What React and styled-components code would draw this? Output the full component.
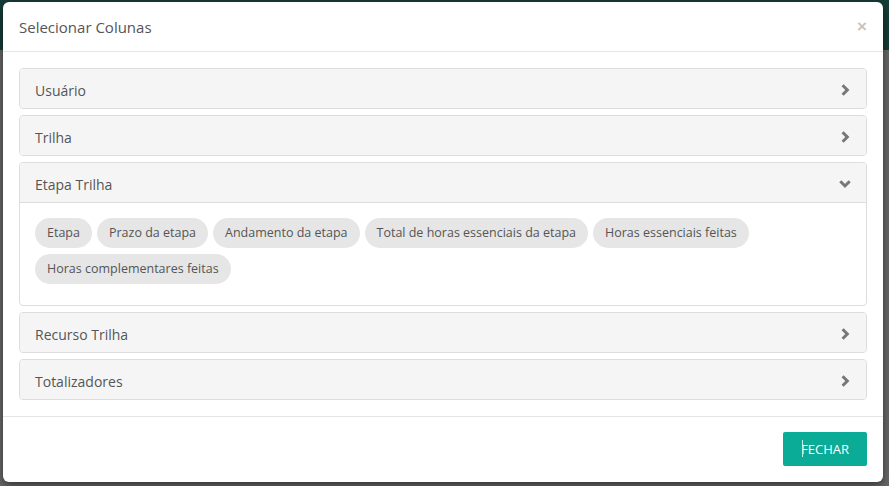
import React, { useState } from "react";
import styled, { createGlobalStyle } from "styled-components";

const Global = createGlobalStyle`
  html, body { margin: 0; padding: 0; }
  body {
    font-family: "Open Sans", "Noto Sans", Arial, sans-serif;
    background: #656565;
    width: 889px;
    height: 486px;
    overflow: hidden;
  }
  * { box-sizing: border-box; }
`;

const Backdrop = styled.div`
  width: 889px;
  height: 486px;
  background: linear-gradient(to bottom, #163c37 0, #163c37 50px, #676767 50px, #676767 100%);
  padding: 2px 6px 4px 3px;
`;

const Modal = styled.div`
  background: #fff;
  border-radius: 6px;
  box-shadow: 0 3px 9px rgba(0, 0, 0, 0.5);
  height: 480px;
  display: flex;
  flex-direction: column;
`;

const Header = styled.div`
  height: 50px;
  border-bottom: 1px solid #e5e5e5;
  padding: 0 16px;
  display: flex;
  align-items: center;
  justify-content: space-between;
`;

const Title = styled.h4`
  margin: 0;
  font-size: 15px;
  font-weight: 400;
  color: #555;
`;

const Close = styled.button`
  border: 0;
  background: none;
  padding: 0;
  font-size: 17px;
  font-weight: 700;
  color: #c4c4c4;
  line-height: 1;
  cursor: pointer;
  font-family: Arial, "Liberation Sans", sans-serif;
`;

const Body = styled.div`
  flex: 1;
  padding: 16px 16px 0 16px;
  display: flex;
  flex-direction: column;
  gap: 6px;
`;

const Panel = styled.div`
  border: 1px solid #ddd;
  border-radius: 4px;
  background: #fff;
  overflow: hidden;
`;

const PanelHeading = styled.div`
  background: #f5f5f5;
  padding: 3px 15px 0;
  display: flex;
  align-items: center;
  justify-content: space-between;
  font-size: 14px;
  color: #555;
  cursor: pointer;
  border-bottom: ${(p) => (p.$open ? "1px solid #ddd" : "0")};
  height: ${(p) => (p.$open ? "40px" : "39px")};
`;

const PanelBody = styled.div`
  padding: 15px 15px 21px 15px;
  display: flex;
  flex-wrap: wrap;
  gap: 6px 5px;
`;

const Chip = styled.span`
  display: inline-block;
  background: #e6e6e6;
  color: #555;
  font-size: 12.5px;
  line-height: 20px;
  padding: 5px 12px;
  border-radius: 15px;
  white-space: nowrap;
`;

const Footer = styled.div`
  height: 66px;
  border-top: 1px solid #e5e5e5;
  padding: 15px 16px 0;
  display: flex;
  justify-content: flex-end;
  align-items: flex-start;
`;

const Button = styled.button`
  width: 84px;
  height: 34px;
  border: 0;
  border-radius: 2px;
  background: #0aab97;
  color: #fff;
  font-family: "Open Sans", Arial, sans-serif;
  font-size: 13px;
  text-transform: uppercase;
  cursor: pointer;
  position: relative;
  padding-bottom: 2px;
`;

const Caret = styled.span`
  position: absolute;
  left: 19px;
  top: 8px;
  width: 1px;
  height: 17px;
  background: #bfeee7;
`;

const Chevron = ({ open }) => (
  <svg width="12" height="12" viewBox="0 0 12 12" aria-hidden="true">
    {open ? (
      <path d="M1.3 3.3 L6 8 L10.7 3.3" fill="none" stroke="#777" strokeWidth="3" strokeLinejoin="miter" />
    ) : (
      <path d="M3.6 1.3 L8.3 6 L3.6 10.7" fill="none" stroke="#777" strokeWidth="3" strokeLinejoin="miter" />
    )}
  </svg>
);

const sections = [
  { name: "Usuário", items: [] },
  { name: "Trilha", items: [] },
  {
    name: "Etapa Trilha",
    items: [
      "Etapa",
      "Prazo da etapa",
      "Andamento da etapa",
      "Total de horas essenciais da etapa",
      "Horas essenciais feitas",
      "Horas complementares feitas",
    ],
  },
  { name: "Recurso Trilha", items: [] },
  { name: "Totalizadores", items: [] },
];

export default function App() {
  const [open, setOpen] = useState("Etapa Trilha");
  return (
    <>
      <Global />
      <Backdrop>
        <Modal>
          <Header>
            <Title>Selecionar Colunas</Title>
            <Close aria-label="Fechar">×</Close>
          </Header>
          <Body>
            {sections.map((s) => {
              const isOpen = open === s.name;
              return (
                <Panel key={s.name}>
                  <PanelHeading $open={isOpen} onClick={() => setOpen(isOpen ? null : s.name)}>
                    <span>{s.name}</span>
                    <Chevron open={isOpen} />
                  </PanelHeading>
                  {isOpen && (
                    <PanelBody>
                      {s.items.map((i) => (
                        <Chip key={i}>{i}</Chip>
                      ))}
                    </PanelBody>
                  )}
                </Panel>
              );
            })}
          </Body>
          <Footer>
            <Button>
              <Caret />
              Fechar
            </Button>
          </Footer>
        </Modal>
      </Backdrop>
    </>
  );
}
